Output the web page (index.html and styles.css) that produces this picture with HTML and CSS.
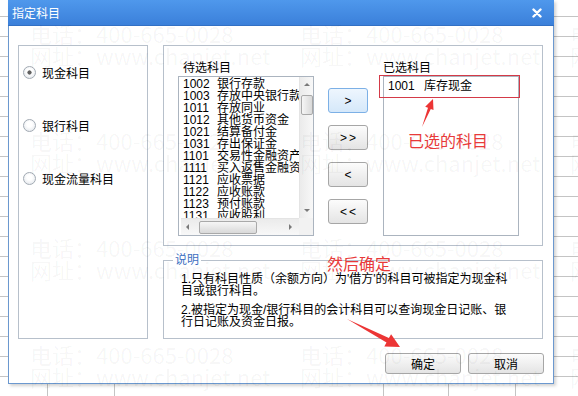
FILE: index.html
```html
<!DOCTYPE html>
<html lang="zh-CN">
<head>
    <meta charset="UTF-8">
    <title>指定科目</title>
    <link rel="stylesheet" href="styles.css">
</head>
<body>
<!-- 对话框 -->
<div class="dialog">
    <div class="titlebar">
        <span class="title">指定科目</span>
        <svg class="close" width="10" height="10" viewBox="0 0 10 10">
            <path d="M1.5 1.5 L8.5 8.5 M8.5 1.5 L1.5 8.5" stroke="#fff" stroke-width="2.4" stroke-linecap="round"/>
        </svg>
    </div>

    <div class="dialog-body">
        <div class="main">
            <!-- 科目类型 -->
            <div class="type-panel">
                <div class="radio-row"><span class="radio checked"></span>现金科目</div>
                <div class="radio-row"><span class="radio"></span>银行科目</div>
                <div class="radio-row"><span class="radio"></span>现金流量科目</div>
            </div>

            <div class="right-col">
                <!-- 待选 / 已选 -->
                <div class="select-panel">
                    <div class="list-col">
                        <div class="list-label">待选科目</div>
                        <div class="listbox source">
                            <div class="list-items">
                                <div class="item"><span class="code">1002</span><span>银行存款</span></div>
                                <div class="item"><span class="code">1003</span><span>存放中央银行款项</span></div>
                                <div class="item"><span class="code">1011</span><span>存放同业</span></div>
                                <div class="item"><span class="code">1012</span><span>其他货币资金</span></div>
                                <div class="item"><span class="code">1021</span><span>结算备付金</span></div>
                                <div class="item"><span class="code">1031</span><span>存出保证金</span></div>
                                <div class="item"><span class="code">1101</span><span>交易性金融资产</span></div>
                                <div class="item"><span class="code">1111</span><span>买入返售金融资产</span></div>
                                <div class="item"><span class="code">1121</span><span>应收票据</span></div>
                                <div class="item"><span class="code">1122</span><span>应收账款</span></div>
                                <div class="item"><span class="code">1123</span><span>预付账款</span></div>
                                <div class="item"><span class="code">1131</span><span>应收股利</span></div>
                            </div>
                            <div class="vscroll">
                                <span class="arrow-up"></span>
                                <span class="thumb-v"></span>
                                <span class="arrow-down"></span>
                            </div>
                            <div class="hscroll">
                                <span class="arrow-left"></span>
                                <span class="thumb-h"></span>
                                <span class="arrow-right"></span>
                            </div>
                            <div class="corner"></div>
                        </div>
                    </div>

                    <div class="move-buttons">
                        <button class="btn move-btn active">&gt;</button>
                        <button class="btn move-btn wide">&gt;&gt;</button>
                        <button class="btn move-btn">&lt;</button>
                        <button class="btn move-btn wide">&lt;&lt;</button>
                    </div>

                    <div class="list-col selected-col">
                        <div class="list-label">已选科目</div>
                        <div class="listbox">
                            <div class="list-items">
                                <div class="item"><span class="code">1001</span><span>库存现金</span></div>
                            </div>
                        </div>
                    </div>
                </div>

                <!-- 说明 -->
                <fieldset class="notes">
                    <legend>说明</legend>
                    <p>1.只有科目性质（余额方向）为'借方'的科目可被指定为现金科<br>目或银行科目。</p>
                    <p>2.被指定为现金/银行科目的会计科目可以查询现金日记账、银<br>行日记账及资金日报。</p>
                </fieldset>
            </div>
        </div>

        <div class="footer">
            <button class="btn dlg-btn">确定</button>
            <button class="btn dlg-btn">取消</button>
        </div>
    </div>
</div>

<!-- 水印 -->
<div class="watermark">
    <div class="wm"><span>电话：400-665-0028</span><span>网址：www.chanjet.net</span></div>
    <div class="wm"><span>电话：400-665-0028</span><span>网址：www.chanjet.net</span></div>
    <div class="wm"><span>电话：400-665-0028</span><span>网址：www.chanjet.net</span></div>
    <div class="wm"><span>电话：400-665-0028</span><span>网址：www.chanjet.net</span></div>
    <div class="wm"><span>电话：400-665-0028</span><span>网址：www.chanjet.net</span></div>
    <div class="wm"><span>电话：400-665-0028</span><span>网址：www.chanjet.net</span></div>
    <div class="wm"><span>电话：400-665-0028</span><span>网址：www.chanjet.net</span></div>
    <div class="wm"><span>电话：400-665-0028</span><span>网址：www.chanjet.net</span></div>
    <div class="wm"><span>电话：400-665-0028</span><span>网址：www.chanjet.net</span></div>
    <div class="wm"><span>电话：400-665-0028</span><span>网址：www.chanjet.net</span></div>
    <div class="wm"><span>电话：400-665-0028</span><span>网址：www.chanjet.net</span></div>
    <div class="wm"><span>电话：400-665-0028</span><span>网址：www.chanjet.net</span></div>
</div>

<!-- 红色标注 -->
<div class="marks">
    <div class="mark-box"></div>
    <span class="mark-text mark-selected">已选的科目</span>
    <span class="mark-text mark-ok">然后确定</span>
    <svg class="mark-arrows" width="578" height="396" viewBox="0 0 578 396">
        <polygon points="422,127 430.8,108.9 433.5,109.9 433,99 425.2,106.7 428,107.8" fill="#ec3535"/>
        <polygon points="347,319 386.5,342.5 384.3,346.4 400,347 391.1,334.2 388.9,338.1" fill="#ec3535"/>
    </svg>
</div>
</body>
</html>
```

FILE: styles.css
```css
body {
    margin: 0;
    width: 578px;
    height: 396px;
    overflow: hidden;
    position: relative;
    font-family: "Liberation Sans", "Noto Sans CJK SC", sans-serif;
    font-size: 12px;
    color: #000;
    background:
        linear-gradient(#c4c4c4, #c4c4c4) 47px 0 / 1px 100% no-repeat,
        linear-gradient(#c4c4c4, #c4c4c4) 114px 0 / 1px 100% no-repeat,
        linear-gradient(#c4c4c4, #c4c4c4) 383px 0 / 1px 100% no-repeat,
        linear-gradient(#c4c4c4, #c4c4c4) 448px 0 / 1px 100% no-repeat,
        linear-gradient(#c4c4c4, #c4c4c4) 515px 0 / 1px 100% no-repeat,
        repeating-linear-gradient(to bottom, #fff 0 16px, #c4c4c4 16px 17px, #fff 17px 20px);
}

/* 对话框 */
.dialog {
    width: 546px;
    height: 384px;
    box-sizing: border-box;
    margin-left: 8px;
    border: 1px solid #6b98cf;
    border-top: 0;
    background: #fff;
    box-shadow: 2px 2px 3px rgba(0, 0, 0, 0.18);
    display: flex;
    flex-direction: column;
}
.titlebar {
    height: 26px;
    box-sizing: border-box;
    margin: 0 -1px;
    padding: 0 12px 0 4px;
    display: flex;
    align-items: center;
    justify-content: space-between;
    background: linear-gradient(#4f98ec, #3b80da);
    border-bottom: 1px solid #3270c4;
    color: #fff;
}
.titlebar .title {
    font-size: 12px;
}
.dialog-body {
    flex: 1;
    padding: 19px 9px 0 9px;
}
.main {
    display: flex;
    gap: 15px;
}

/* 科目类型 */
.type-panel {
    width: 130px;
    height: 294px;
    box-sizing: border-box;
    border: 1px solid #b7c0cb;
    padding: 19px 0 0 4px;
}
.radio-row {
    display: flex;
    align-items: center;
    gap: 6px;
    height: 14px;
    font-size: 12px;
}
.radio-row + .radio-row {
    margin-top: 39px;
}
.radio {
    width: 13px;
    height: 13px;
    box-sizing: border-box;
    border-radius: 50%;
    border: 1px solid #a2aab3;
    background: radial-gradient(circle at 50% 40%, #fff 30%, #dde2e8);
}
.radio.checked {
    background:
        radial-gradient(circle, #606060 0 1.8px, transparent 2.4px),
        radial-gradient(circle at 50% 40%, #fff 30%, #dde2e8);
}

/* 待选 / 已选 */
.right-col {
    width: 380px;
    display: flex;
    flex-direction: column;
}
.select-panel {
    height: 201px;
    box-sizing: border-box;
    border: 1px solid #b7c0cb;
    padding: 15px 0 0 14px;
    display: flex;
    align-items: flex-start;
}
.list-label {
    line-height: 14px;
    margin-bottom: 1px;
    padding-left: 5px;
}
.selected-col {
    margin-left: 15px;
}
.selected-col .list-label {
    padding-left: 0;
}
.listbox {
    width: 136px;
    height: 160px;
    box-sizing: border-box;
    border: 1px solid #abb4bf;
    overflow: hidden;
}
.listbox.source {
    display: grid;
    grid-template-columns: 1fr 14px;
    grid-template-rows: 1fr 17px;
}
.list-items {
    overflow: hidden;
    padding: 1px 0 0 4px;
}
.item {
    display: flex;
    height: 12px;
    line-height: 12px;
    white-space: nowrap;
}
.item .code {
    width: 34px;
    flex: none;
}
.selected-col .item {
    padding-top: 2px;
}
.selected-col .item .code {
    width: 36px;
}

/* 滚动条 */
.vscroll {
    display: flex;
    flex-direction: column;
    align-items: center;
    background: linear-gradient(to right, #ebebeb, #f8f8f8);
    border-left: 1px solid #e4e4e4;
}
.arrow-up {
    margin-top: 6px;
    border-left: 3px solid transparent;
    border-right: 3px solid transparent;
    border-bottom: 3px solid #7a7a7a;
}
.thumb-v {
    margin-top: 9px;
    width: 12px;
    height: 20px;
    box-sizing: border-box;
    border: 1px solid #a9a9a9;
    border-radius: 2px;
    background: linear-gradient(to right, #f6f6f6, #d9d9d9);
}
.arrow-down {
    margin-top: auto;
    margin-bottom: 6px;
    border-left: 3px solid transparent;
    border-right: 3px solid transparent;
    border-top: 3px solid #7a7a7a;
}
.hscroll {
    display: flex;
    align-items: center;
    background: linear-gradient(#ebebeb, #f8f8f8);
    border-top: 1px solid #e4e4e4;
    margin-left: 2px;
}
.arrow-left {
    margin-left: 5px;
    border-top: 3px solid transparent;
    border-bottom: 3px solid transparent;
    border-right: 3px solid #7a7a7a;
}
.thumb-h {
    margin-left: 10px;
    width: 58px;
    height: 13px;
    box-sizing: border-box;
    border: 1px solid #a9a9a9;
    border-radius: 2px;
    background: linear-gradient(#f6f6f6, #d9d9d9);
}
.arrow-right {
    margin-left: auto;
    margin-right: 7px;
    border-top: 3px solid transparent;
    border-bottom: 3px solid transparent;
    border-left: 3px solid #7a7a7a;
}
.corner {
    background: #f2f2f2;
}

/* 按钮 */
.btn {
    font-family: "Liberation Sans", "Noto Sans CJK SC", sans-serif;
    font-size: 12px;
    color: #000;
    padding: 0;
    border: 1px solid #a6a6a6;
    border-radius: 3px;
    background: linear-gradient(#fcfcfc, #e4e4e4);
}
.btn.active {
    border-color: #7cb0e6;
    background: linear-gradient(#eef6fe, #d5e8fa);
}
.move-buttons {
    margin: 27px 0 0 14px;
    display: flex;
    flex-direction: column;
    gap: 12px;
}
.move-btn {
    width: 40px;
    height: 25px;
}
.move-btn.wide {
    letter-spacing: 2px;
    padding-left: 2px;
}

/* 说明 */
.notes {
    margin: 7px 0 0;
    height: 86px;
    box-sizing: border-box;
    border: 1px solid #b7c0cb;
    padding: 0 8px 0 17px;
    min-width: 0;
}
.notes legend {
    margin-left: -8px;
    padding: 0 2px;
    line-height: 14px;
    color: #3d6fc1;
}
.notes p {
    margin: 6px 0 0;
    line-height: 12px;
    white-space: nowrap;
}
.notes p + p {
    margin-top: 7px;
}

/* 底部按钮 */
.footer {
    margin-top: 14px;
    display: flex;
    justify-content: flex-end;
    gap: 7px;
}
.dlg-btn {
    width: 76px;
    height: 21px;
}

/* 水印 */
.watermark {
    position: absolute;
    left: 0;
    top: 0;
    width: 578px;
    height: 396px;
    box-sizing: border-box;
    padding: 22px 0 0 30px;
    display: grid;
    grid-template-columns: repeat(3, 270px);
    grid-auto-rows: 107px;
    overflow: hidden;
    pointer-events: none;
    color: rgba(0, 0, 0, 0.045);
    font-family: "Noto Sans CJK SC", sans-serif;
    font-size: 22px;
}
.wm span {
    display: block;
    line-height: 22px;
    white-space: nowrap;
}

/* 红色标注 */
.marks {
    position: absolute;
    left: 0;
    top: 0;
    width: 578px;
    height: 396px;
    pointer-events: none;
}
.mark-box {
    position: absolute;
    left: 379px;
    top: 75px;
    width: 141px;
    height: 23px;
    box-sizing: border-box;
    border: 1px solid #d43a48;
}
.mark-text {
    position: absolute;
    color: #e83a3a;
    font-family: "Noto Sans CJK SC", sans-serif;
    font-size: 16px;
    line-height: 18px;
}
.mark-selected {
    left: 408px;
    top: 131px;
}
.mark-ok {
    left: 327px;
    top: 254px;
}
.mark-arrows {
    position: absolute;
    left: 0;
    top: 0;
}
```
